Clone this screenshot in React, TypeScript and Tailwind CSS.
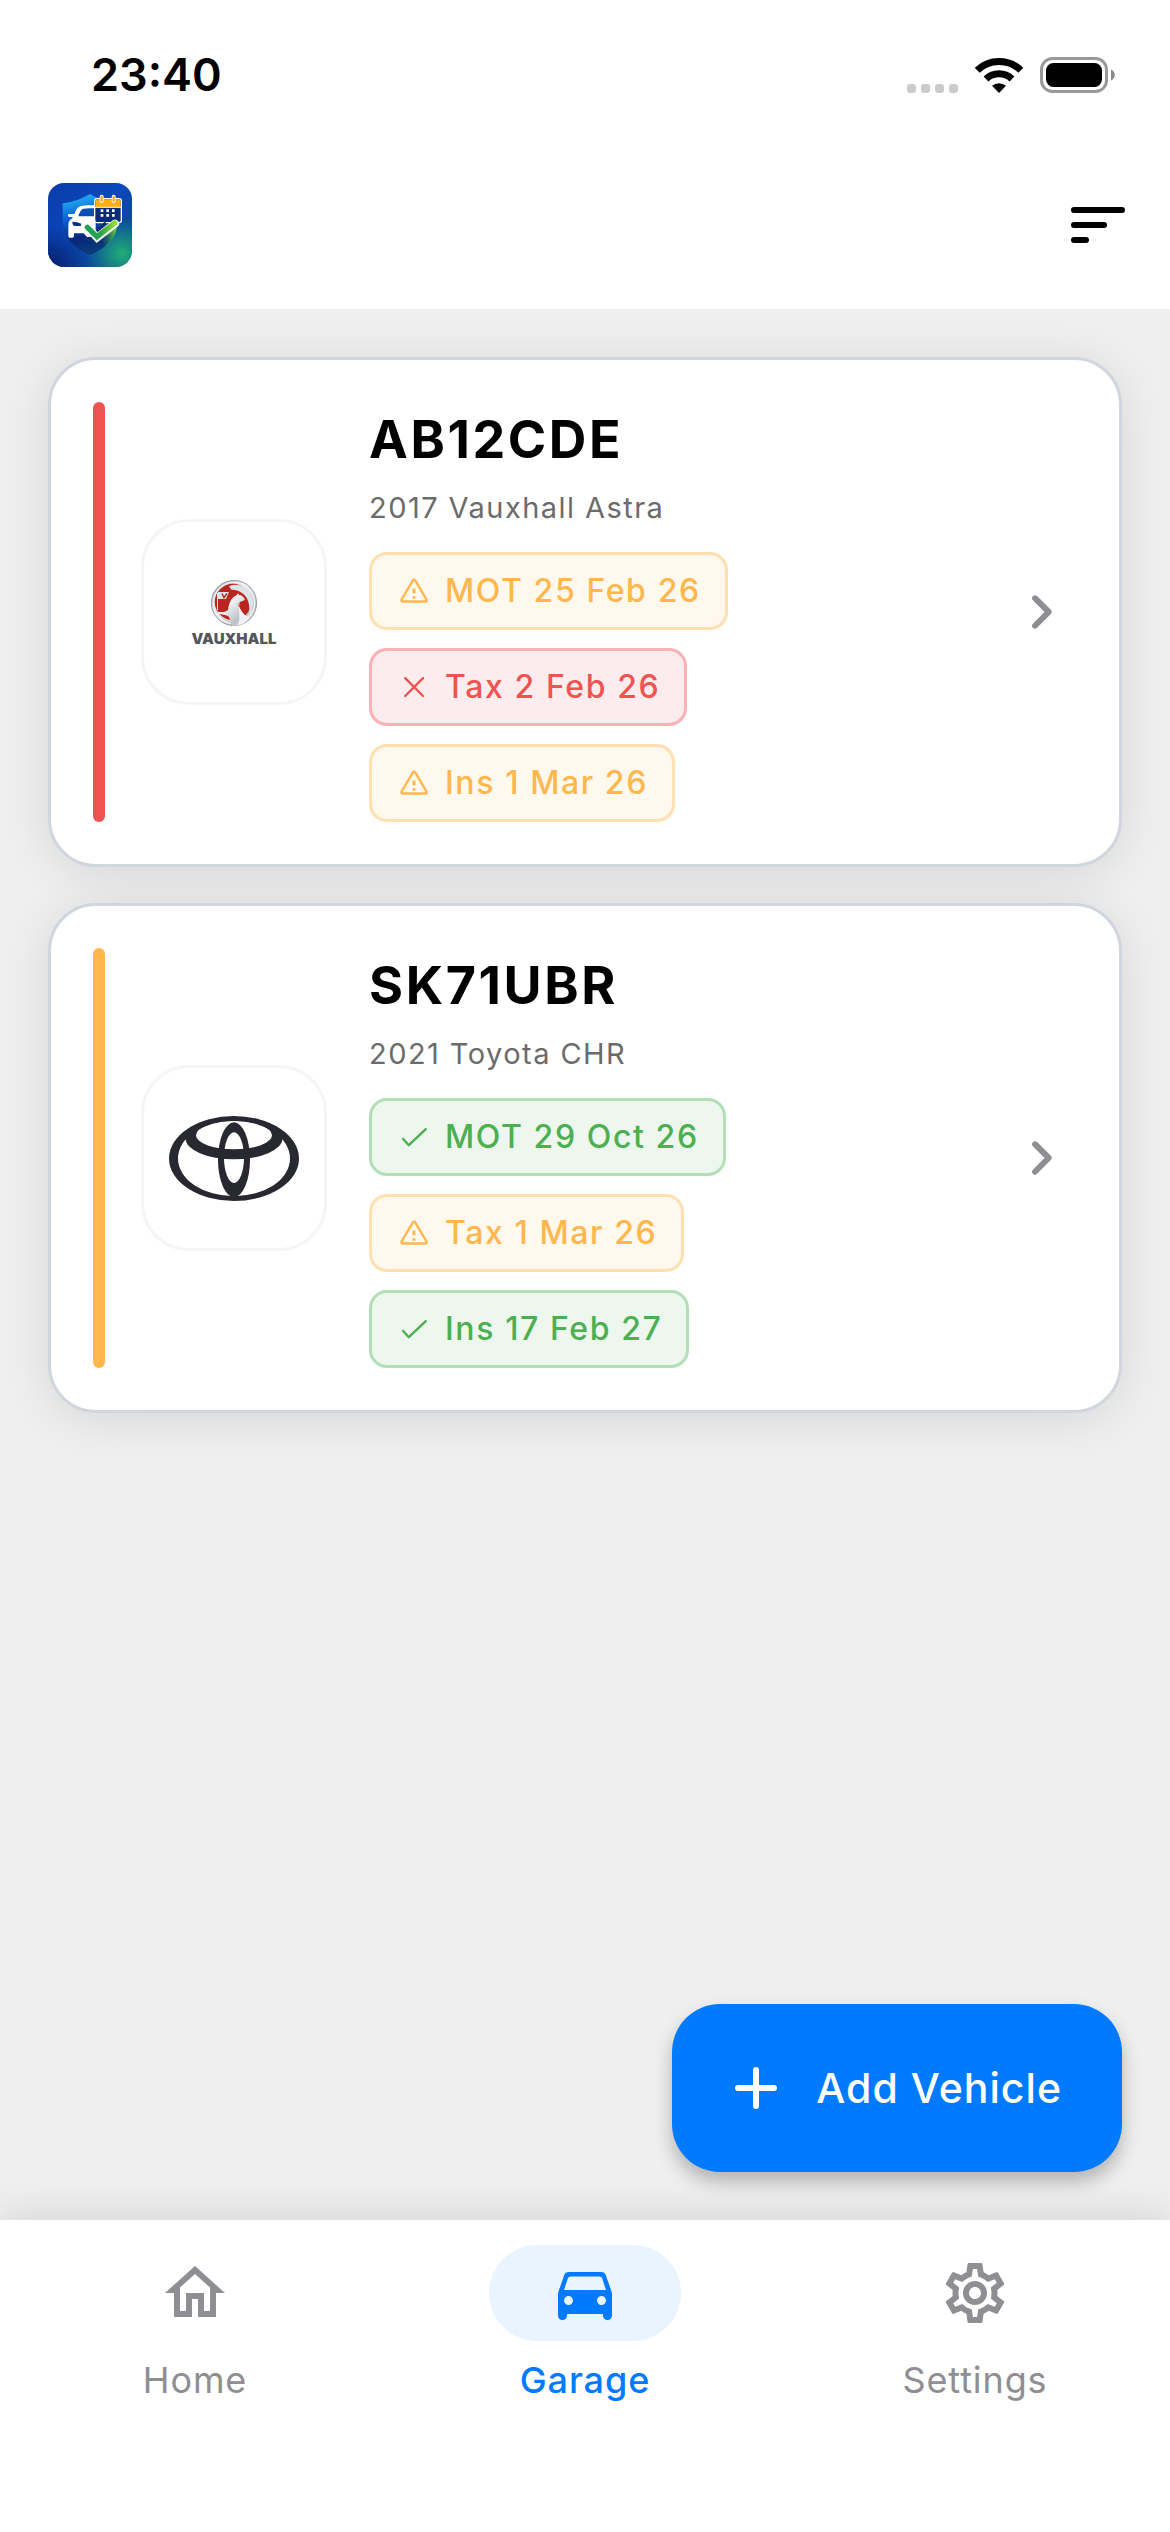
import React, { useState } from "react";
import { MdOutlineHome, MdOutlineSettings } from "react-icons/md";
import { cva } from "class-variance-authority";
import clsx from "clsx";

type Status = "ok" | "warning" | "expired";

interface Check {
  label: string;
  status: Status;
}

interface Vehicle {
  plate: string;
  description: string;
  status: Status;
  logo: React.ReactNode;
  checks: Check[];
}

const badge = cva(
  "flex h-[78px] items-center gap-4 rounded-[18px] border-3 pr-6 pl-[27px] text-[32px] leading-10 font-medium tracking-wider",
  {
    variants: {
      status: {
        ok: "border-[#b3dfb6] bg-[#edf7ee] text-[#4caf50]",
        warning: "border-[#ffe0b0] bg-[#fff8ed] text-[#ffb74d]",
        expired: "border-[#fab2b4] bg-[#fdeced] text-[#ef5350]",
      },
    },
  }
);

const bar = cva("w-3 shrink-0 rounded-full", {
  variants: {
    status: {
      ok: "bg-[#4caf50]",
      warning: "bg-[#ffb74d]",
      expired: "bg-[#ef5350]",
    },
  },
});

function StatusIcon({ status }: { status: Status }) {
  return (
    <svg
      className="size-[30px] shrink-0"
      viewBox="0 0 30 30"
      fill="none"
      stroke="currentColor"
      strokeWidth="2.4"
      strokeLinecap="round"
      strokeLinejoin="round"
      aria-hidden="true"
    >
      {status === "ok" && <path d="M4 16.8 9.800 23.200 26.800 7.200" />}
      {status === "expired" && <path d="M6.2 6.2 24 24M24 6.2 6.2 24" />}
      {status === "warning" && (
        <>
          <path d="M13.9 4.3a1.3 1.3 0 0 1 2.3 0l11.3 19.2a1.3 1.3 0 0 1-1.1 2H3.7a1.3 1.3 0 0 1-1.1-2z" />
          <path d="M15 12.600v4.600M15 20.200v2.600" strokeLinecap="butt" strokeWidth="2.8" />
        </>
      )}
    </svg>
  );
}

function AppLogo() {
  return (
    <svg className="size-[84px] rounded-2xl" viewBox="24 24 252 252" role="img" aria-label="Garage app">
      <defs>
        <linearGradient id="tile" x1="0" y1="0" x2="1" y2="1">
          <stop offset="0" stopColor="#0a3aa8" />
          <stop offset="0.45" stopColor="#0b48bd" />
          <stop offset="1" stopColor="#0a4a80" />
        </linearGradient>
        <radialGradient id="glow" cx="0.88" cy="0.84" r="0.42">
          <stop offset="0" stopColor="#1fae78" />
          <stop offset="1" stopColor="#1fae78" stopOpacity="0" />
        </radialGradient>
        <radialGradient id="shade" cx="0" cy="1" r="0.5">
          <stop offset="0" stopColor="#061c66" />
          <stop offset="1" stopColor="#061c66" stopOpacity="0" />
        </radialGradient>
        <linearGradient id="shield" x1="0.3" y1="0" x2="0.5" y2="1">
          <stop offset="0" stopColor="#25b4f4" />
          <stop offset="0.35" stopColor="#0b62d4" />
          <stop offset="0.7" stopColor="#08277c" />
          <stop offset="1" stopColor="#0a3f78" />
        </linearGradient>
        <linearGradient id="leaf" x1="0.3" y1="0.6" x2="1" y2="0.4">
          <stop offset="0.2" stopColor="#2fae50" stopOpacity="0" />
          <stop offset="1" stopColor="#5fcb3c" />
        </linearGradient>
        <linearGradient id="tick" x1="0" y1="0" x2="1" y2="0">
          <stop offset="0" stopColor="#1fa356" />
          <stop offset="0.5" stopColor="#28a548" />
          <stop offset="1" stopColor="#8edb34" />
        </linearGradient>
      </defs>
      <path d="M24 24h252v252H24z" fill="url(#tile)" />
      <path d="M24 24h252v252H24z" fill="url(#shade)" />
      <path d="M24 24h252v252H24z" fill="url(#glow)" />
      <path d="M150 57c24 14 50 24 82 28v50c0 50-32 84-82 105-50-21-82-55-82-105V85c32-4 58-14 82-28z" fill="url(#shield)" />
      <path d="M150 150h82c-4 42-36 72-82 90z" fill="url(#leaf)" />
      {/* car */}
      <path d="M108 128l12-26c2-5 6-6 12-6h34v34z" fill="#0d4cb8" />
      <path
        d="M84 121c0-3 2-4 5-4h14c5-11 9-22 20-24 14-2 30-2 44-2v9c-14 0-26 0-36 1-7 1-10 8-14 17l-2 6h52v62h-26l-10-11H102v7c0 4-3 6-7 6h-4c-4 0-6-2-6-6v-32c0-9 4-15 12-20l1-4h-9c-4 0-5-2-5-5z"
        fill="#fff"
      />
      <path d="M97 140c9 0 19 2 27 6l-2 7h-16c-6 0-9-5-9-13z" fill="#0b2f86" />
      {/* calendar */}
      <rect x="164" y="71" width="80" height="72" rx="7" fill="#0a2c74" stroke="#fff" strokeWidth="4" />
      <path d="M166 96V79c0-4 3-6 6-6h64c4 0 6 2 6 6v17z" fill="#ffae14" />
      <path d="M165 97h78" stroke="#fff" strokeWidth="3" />
      <path d="M185 65v13M221 65v13" stroke="#fff" strokeWidth="12" strokeLinecap="round" />
      <path d="M185 66v11M221 66v11" stroke="#ffa814" strokeWidth="7" strokeLinecap="round" />
      <path
        d="M182 103h8v8h-8zM199 103h8v8h-8zM216 103h8v8h-8zM182 117h8v8h-8zM199 117h8v8h-8zM216 117h8v8h-8z"
        fill="#fff"
      />
      {/* tick */}
      <path d="M174 168l20-22" stroke="#0a2c74" strokeWidth="9" strokeLinecap="round" />
      <path d="M144 158l27 30 54-42" fill="none" stroke="#fff" strokeWidth="24" strokeLinecap="round" />
      <path d="M142 157l29 28 53-41" fill="none" stroke="url(#tick)" strokeWidth="16" strokeLinecap="round" />
    </svg>
  );
}

function VauxhallLogo() {
  return (
    <svg className="size-[120px]" viewBox="0 0 120 120" role="img" aria-label="Vauxhall">
      <defs>
        <linearGradient id="silver" x1="0" y1="0" x2="1" y2="1">
          <stop offset="0" stopColor="#8d9298" />
          <stop offset="0.4" stopColor="#eef0f2" />
          <stop offset="0.75" stopColor="#b9bfc5" />
          <stop offset="1" stopColor="#eceef0" />
        </linearGradient>
      </defs>
      <circle cx="60" cy="51" r="22.6" fill="url(#silver)" stroke="#9a9fa5" strokeWidth="1" />
      <circle cx="60" cy="51" r="20.6" fill="none" stroke="#f2f3f5" strokeWidth="1.4" />
      <circle cx="59" cy="50" r="18.2" fill="#b8261f" />
      {/* wing sweeping over the top */}
      <path
        d="M55 34c9-3.500 19 1 22 8 4 9 2 18-4 24 2-4 3-8 2-13-1-9-8-15-18-15.500z"
        fill="#dfe3e7"
      />
      {/* griffin */}
      <path
        d="M41 59c6 2 11 1 13-1 1-7 3-13 9-15l1-2 1 2c3 0 5 2 6 5l-5 2c-2 1-2 3 0 7 2 5 7 8 9 9-4 6-10 8-16 8-3 0-2-8-5-10-4-2-9 0-13-5z"
        fill="url(#silver)"
      />
      <path d="M66 50c-2 2-1 5 1 8 3 5 6 7 9 7-3 5-8 8-13 8 5-6 0-14 3-23z" fill="#eef0f2" />
      <path d="M44 40h11l-3 7h-8z" fill="#dfe3e7" />
      <path d="M48 41.500l2 4 3-4" fill="none" stroke="#b8261f" strokeWidth="1.500" />
      <path d="M43.500 41v17" stroke="#dfe3e7" strokeWidth="1" />
      <text
        x="60"
        y="92"
        textAnchor="middle"
        fontFamily="Inter, sans-serif"
        fontSize="15"
        fontWeight="900"
        fill="#54585e"
      >
        VAUXHALL
      </text>
    </svg>
  );
}

function ToyotaLogo() {
  return (
    <svg className="w-[130px]" viewBox="117 196 390 255" fill="#282830" fillRule="evenodd" role="img" aria-label="Toyota">
      <path d="M117 323.500a195 127.500 0 1 0 390 0a195 127.500 0 1 0-390 0zM144 323.500a168 113 0 1 0 336 0a168 113 0 1 0-336 0z" />
      <path d="M264 327a48 112 0 1 0 96 0a48 112 0 1 0-96 0zM282 321a30 76 0 1 0 60 0a30 76 0 1 0-60 0z" />
      <path d="M167 264a145 62 0 1 0 290 0a145 62 0 1 0-290 0zM198 253.500a114 42.500 0 1 0 228 0a114 42.500 0 1 0-228 0z" />
    </svg>
  );
}

const vehicles: Vehicle[] = [
  {
    plate: "AB12CDE",
    description: "2017 Vauxhall Astra",
    status: "expired",
    logo: <VauxhallLogo />,
    checks: [
      { label: "MOT 25 Feb 26", status: "warning" },
      { label: "Tax 2 Feb 26", status: "expired" },
      { label: "Ins 1 Mar 26", status: "warning" },
    ],
  },
  {
    plate: "SK71UBR",
    description: "2021 Toyota CHR",
    status: "warning",
    logo: <ToyotaLogo />,
    checks: [
      { label: "MOT 29 Oct 26", status: "ok" },
      { label: "Tax 1 Mar 26", status: "warning" },
      { label: "Ins 17 Feb 27", status: "ok" },
    ],
  },
];

function StatusBar() {
  return (
    <div className="flex h-[141px] items-center justify-between pt-2 pr-[55px] pl-[91px]">
      <span className="text-[45px] leading-[56px] font-semibold">23:40</span>
      <svg className="h-9 w-[208px]" viewBox="0 0 208 36" aria-hidden="true">
        <g fill="#cbcbcb">
          <rect x="0" y="27" width="9" height="9" rx="3" />
          <rect x="14" y="27" width="9" height="9" rx="3" />
          <rect x="28" y="27" width="9" height="9" rx="3" />
          <rect x="42" y="27" width="9" height="9" rx="3" />
        </g>
        <g fill="none" stroke="#000" strokeWidth="7">
          <path d="M70.200 13.200a31.500 31.500 0 0 1 43.600 0" />
          <path d="M79 22a19 19 0 0 1 26 0" />
        </g>
        <path d="M92 36l-7-7.200a10.500 10.500 0 0 1 14 0z" />
        <rect x="134.500" y="1.500" width="65" height="33" rx="11" fill="none" stroke="#999" strokeWidth="3" />
        <rect x="139" y="6" width="56" height="24" rx="7.500" />
        <path d="M204 12.500c5 2 5 9 0 11z" fill="#8a8a8a" />
      </svg>
    </div>
  );
}

function VehicleCard({ vehicle }: { vehicle: Vehicle }) {
  return (
    <button className="flex w-full items-stretch rounded-[48px] border-3 border-[#d1d5de] bg-white p-[42px] text-left shadow-[0_6px_48px_rgba(0,0,0,0.1)]">
      <span className={bar({ status: vehicle.status })} />
      <span className="ml-9 flex size-[186px] shrink-0 items-center justify-center self-center rounded-[48px] border-3 border-[#f5f5f5]">
        {vehicle.logo}
      </span>
      <span className="ml-[42px] flex min-w-0 flex-1 flex-col items-start">
        <span className="text-[52px] leading-[76px] font-bold tracking-wider">{vehicle.plate}</span>
        <span className="mt-2.5 text-[29px] leading-10 tracking-wider text-[#6b6b6b]">
          {vehicle.description}
        </span>
        <span className="mt-6 flex flex-col items-start gap-[18px]">
          {vehicle.checks.map((check) => (
            <span key={check.label} className={badge({ status: check.status })}>
              <StatusIcon status={check.status} />
              {check.label}
            </span>
          ))}
        </span>
      </span>
      <svg className="size-[72px] shrink-0 self-center" viewBox="0 0 24 24" fill="#8e8e93" aria-hidden="true">
        <path d="M9.290 6.710c-.39.39-.39 1.020 0 1.410L13.170 12l-3.880 3.880c-.39.39-.39 1.020 0 1.410.39.39 1.020.39 1.410 0l4.590-4.590c.39-.39.39-1.020 0-1.410L10.700 6.700c-.38-.38-1.020-.38-1.410.01z" />
      </svg>
    </button>
  );
}

function CarIcon() {
  return (
    <svg className="size-[72px]" viewBox="0 0 24 24" fill="currentColor" aria-hidden="true">
      <path d="M18.920 6.010C18.720 5.420 18.160 5 17.500 5h-11c-.66 0-1.210.42-1.420 1.010l-1.970 5.670c-.07.21-.11.43-.11.66v7.160c0 .83.67 1.500 1.500 1.500S6 20.330 6 19.500V19h12v.5c0 .82.67 1.500 1.500 1.500.82 0 1.500-.67 1.500-1.500v-7.160c0-.22-.04-.45-.11-.66l-1.970-5.670zM6.500 16c-.83 0-1.500-.67-1.500-1.500S5.670 13 6.500 13s1.500.67 1.500 1.500S7.330 16 6.500 16zm11 0c-.83 0-1.500-.67-1.500-1.500s.67-1.500 1.500-1.500 1.500.67 1.500 1.500-.67 1.500-1.500 1.500zM5 11l1.270-3.820c.14-.4.52-.68.95-.68h9.560c.43 0 .81.28.95.68L19 11H5z" />
    </svg>
  );
}

const tabs = [
  { name: "Home", icon: <MdOutlineHome className="size-[72px]" /> },
  { name: "Garage", icon: <CarIcon /> },
  { name: "Settings", icon: <MdOutlineSettings className="size-[72px]" /> },
];

export default function App() {
  const [activeTab, setActiveTab] = useState("Garage");

  return (
    <div className="flex min-h-screen flex-col bg-[#efefef] font-['Inter',sans-serif] text-black">
      <header className="z-10 bg-white">
        <StatusBar />
        <div className="flex h-42 items-center justify-between pr-9 pl-12">
          <AppLogo />
          <button aria-label="Sort vehicles">
            <svg className="size-[72px]" viewBox="0 0 24 24" stroke="#000" strokeWidth="2" strokeLinecap="round">
              <path d="M4 7h16M4 12h10M4 17h4" />
            </svg>
          </button>
        </div>
      </header>

      <main className="relative flex flex-1 flex-col gap-9 p-12">
        {vehicles.map((vehicle) => (
          <VehicleCard key={vehicle.plate} vehicle={vehicle} />
        ))}

        {/* Floating action button */}
        <button className="absolute right-12 bottom-12 flex h-42 items-center gap-6 rounded-[48px] bg-[#007aff] pr-[60px] pl-12 text-[41px] leading-[48px] font-medium tracking-wide text-white shadow-[0_10px_18px_rgba(0,0,0,0.25)]">
          <svg className="size-[72px]" viewBox="0 0 24 24" stroke="currentColor" strokeWidth="2" strokeLinecap="round" aria-hidden="true">
            <path d="M12 6v12M6 12h12" />
          </svg>
          Add Vehicle
        </button>
      </main>

      <nav className="grid grid-cols-3 bg-white pt-[25px] pb-[130px] shadow-[0_-6px_36px_rgba(0,0,0,0.1)]">
        {tabs.map((tab) => {
          const active = tab.name === activeTab;
          return (
            <button
              key={tab.name}
              onClick={() => setActiveTab(tab.name)}
              className={clsx(
                "flex flex-col items-center gap-[17px] text-[36px] leading-[44px] tracking-wide",
                active ? "font-medium text-[#007aff]" : "text-[#8e8e93]"
              )}
            >
              <span
                className={clsx(
                  "flex h-24 w-48 items-center justify-center rounded-full",
                  active && "bg-[#e9f4ff]"
                )}
              >
                {tab.icon}
              </span>
              {tab.name}
            </button>
          );
        })}
      </nav>
    </div>
  );
}
